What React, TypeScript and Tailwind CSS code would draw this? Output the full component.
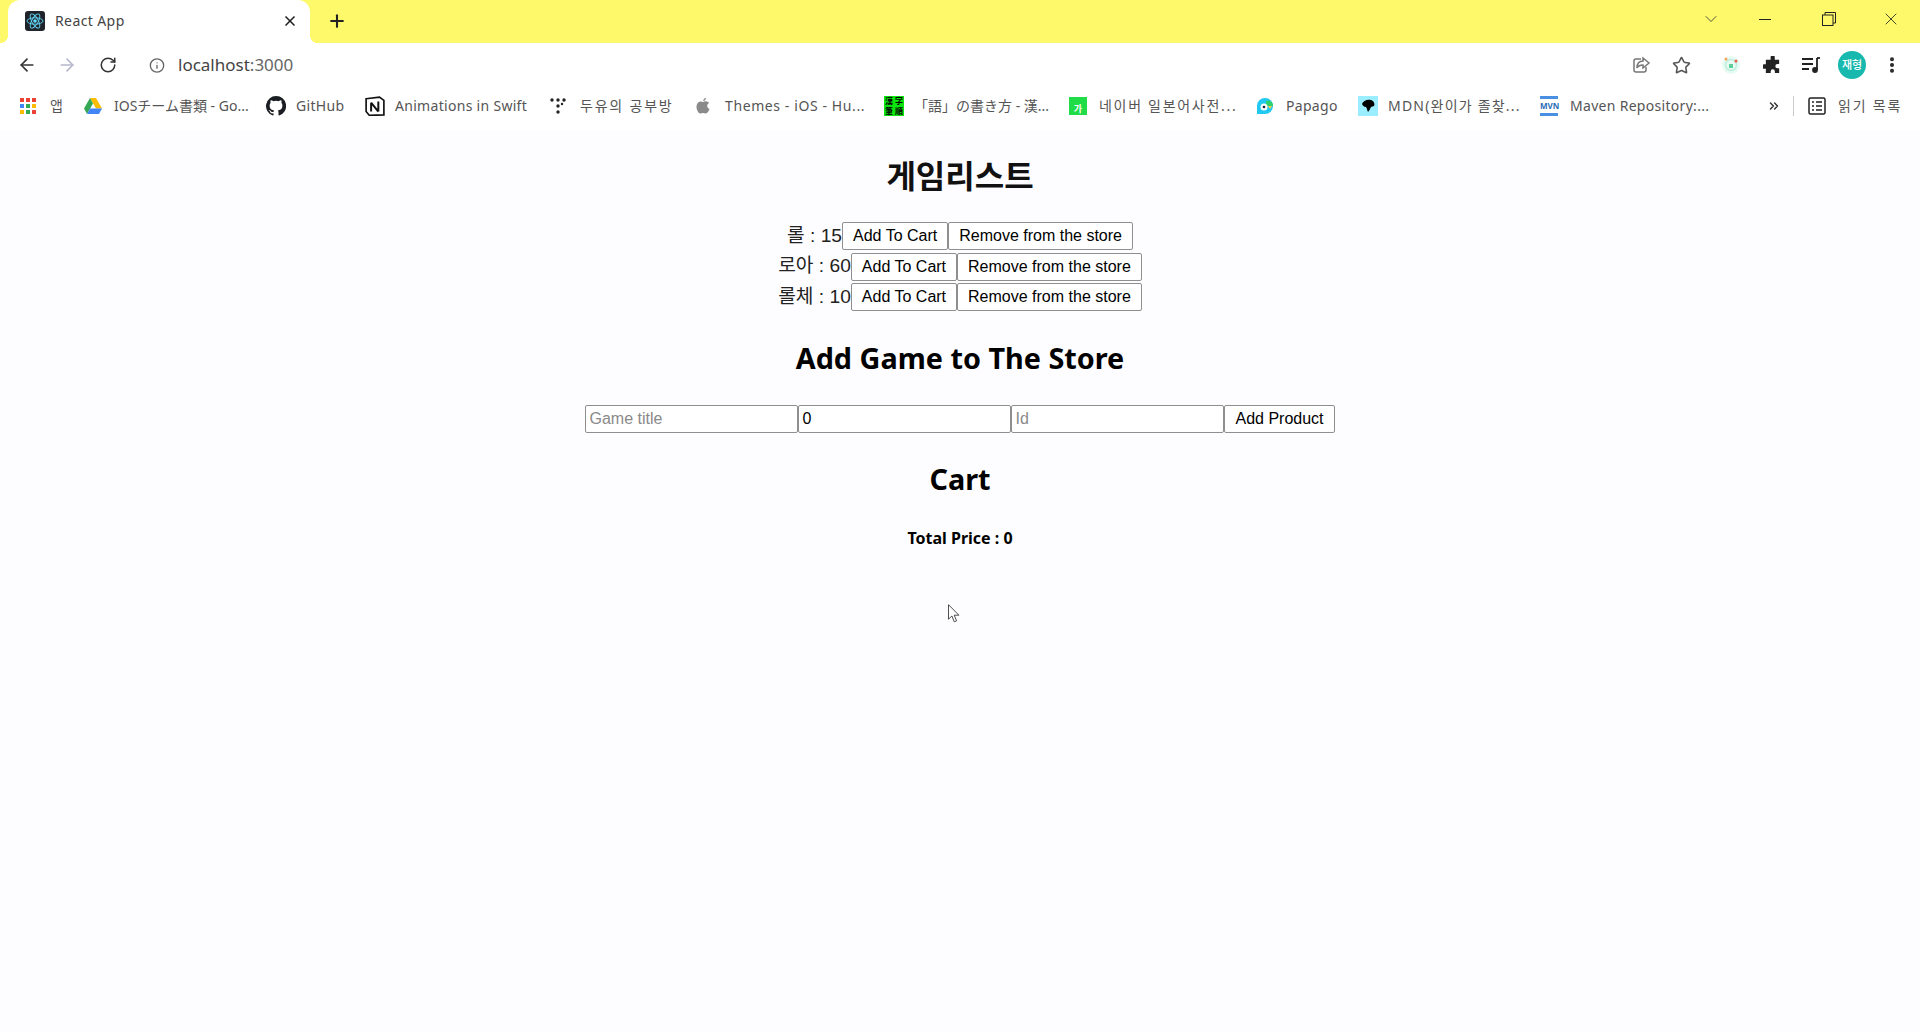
import { ArrowLeft, ArrowRight, ChevronDown, ChevronsRight, Info, MoreVertical, Plus, RotateCw, Star, X } from "lucide-react";
import type { ReactNode } from "react";

type Game = { name: string; price: number };

const GAMES: Game[] = [
  { name: "롤", price: 15 },
  { name: "로아", price: 60 },
  { name: "롤체", price: 10 },
];

const KO = "[font-family:'Noto_Sans','Noto_Sans_CJK_KR',sans-serif]";
const ARIAL = "[font-family:'Liberation_Sans','Noto_Sans_CJK_KR',sans-serif]";

function ReactLogo() {
  return (
    <svg viewBox="0 0 20 20" className="h-5 w-5 rounded-[3px] bg-[#20232a]">
      <circle cx="10" cy="10" r="1.8" fill="#61dafb" />
      <g fill="none" stroke="#61dafb" strokeWidth="0.9">
        <ellipse cx="10" cy="10" rx="8" ry="3.2" />
        <ellipse cx="10" cy="10" rx="8" ry="3.2" transform="rotate(60 10 10)" />
        <ellipse cx="10" cy="10" rx="8" ry="3.2" transform="rotate(120 10 10)" />
      </g>
    </svg>
  );
}

function AppsIcon() {
  const colors = ["#ea4335", "#ea4335", "#ea4335", "#4285f4", "#34a853", "#fbbc04", "#fbbc04", "#34a853", "#ea4335"];
  return (
    <div className="grid h-4 w-4 grid-cols-3 gap-[2px]">
      {colors.map((c, i) => (
        <svg key={i} viewBox="0 0 4 4" className="h-full w-full">
          <rect width="4" height="4" fill={c} />
        </svg>
      ))}
    </div>
  );
}

function Drive() {
  return (
    <svg viewBox="0 0 18 16" className="h-4 w-[18px]">
      <path d="M6 0h6l6 10.5h-6z" fill="#fbbc04" />
      <path d="M6 0l-6 10.5 3 5.5 6-10.5z" fill="#34a853" />
      <path d="M3 16h12l3-5.500H6z" fill="#4285f4" />
    </svg>
  );
}

function Github() {
  return (
    <svg viewBox="0 0 16 16" className="h-5 w-5" fill="#1b1f23">
      <path d="M8 0a8 8 0 0 0-2.530 15.590c.4.070.550-.170.550-.380v-1.340c-2.230.480-2.700-1.070-2.700-1.070-.360-.930-.890-1.170-.890-1.170-.730-.500.050-.490.050-.490.800.060 1.230.830 1.230.830.710 1.220 1.870.870 2.330.660.070-.520.280-.870.510-1.070-1.780-.200-3.640-.890-3.640-3.950 0-.870.310-1.590.820-2.150-.080-.200-.360-1.020.080-2.120 0 0 .670-.210 2.200.820a7.600 7.600 0 0 1 4 0c1.530-1.040 2.200-.820 2.200-.820.440 1.100.160 1.920.080 2.120.510.560.820 1.270.820 2.150 0 3.070-1.870 3.750-3.650 3.950.290.250.540.730.540 1.480v2.200c0 .210.150.460.550.380A8 8 0 0 0 8 0z" />
    </svg>
  );
}

function Notion() {
  return (
    <svg viewBox="0 0 18 18" className="h-5 w-5">
      <path d="M1 2.500L13 1l4 3v13L4 17.500 1 14z" fill="#fff" stroke="#111" strokeWidth="1.500" />
      <path d="M5.500 6v8M5.500 6l6.500 8M12 5v9" fill="none" stroke="#111" strokeWidth="1.800" />
    </svg>
  );
}

function Dots() {
  return (
    <svg viewBox="0 0 16 18" className="h-[18px] w-4" fill="#222">
      <circle cx="2" cy="3" r="1.700" />
      <circle cx="8" cy="3" r="1.700" />
      <circle cx="14" cy="3" r="1.700" />
      <circle cx="8" cy="9" r="1.700" />
      <circle cx="8" cy="15" r="1.700" />
      <circle cx="12" cy="7" r="1.200" />
    </svg>
  );
}

function Apple() {
  return (
    <svg viewBox="0 0 16 18" className="h-[18px] w-4" fill="#8a8a8a">
      <path d="M11 1c.1 1.400-1.200 3-2.800 3C8 2.500 9.500 1.100 11 1zM8 5c.9 0 1.700-.700 3-.700 1.200 0 2.400.700 3 1.700-2.600 1.500-2.200 5 .5 6-.7 1.800-2.100 4.500-3.700 4.500-1 0-1.500-.600-2.700-.600s-1.800.600-2.700.600C3.500 16.500 1.500 12.800 1.500 10c0-3.300 2.100-5.500 4.200-5.500C6.700 4.500 7.300 5 8 5z" />
    </svg>
  );
}

function Kanji() {
  return (
    <div className="grid h-5 w-5 grid-cols-2 bg-[#0ce60c] text-center text-[8px] leading-[10px] font-bold text-black [font-family:'Noto_Sans_CJK_JP',sans-serif]">
      <span>漢</span>
      <span>字</span>
      <span>筆</span>
      <span>順</span>
    </div>
  );
}

function Naver() {
  return (
    <div className="flex h-[18px] w-[18px] items-end justify-center bg-[#1fdc47] text-[9px] leading-[13px] font-bold text-white">
      가
    </div>
  );
}

function Papago() {
  return (
    <svg viewBox="0 0 18 20" className="h-5 w-[18px]">
      <path d="M9 2a8 8 0 0 1 8 8 8 8 0 0 1-8 8H1v-8a8 8 0 0 1 8-8z" fill="#21c8f0" />
      <path d="M10 5a5 5 0 0 1 7 5h-7z" fill="#2fd06c" />
      <circle cx="8" cy="11" r="3.500" fill="#fff" />
      <circle cx="8" cy="11" r="1.300" fill="#123" />
      <path d="M12 10h4l-2 3z" fill="#fbd33a" />
    </svg>
  );
}

function Mdn() {
  return (
    <svg viewBox="0 0 20 20" className="h-5 w-5">
      <rect width="20" height="20" fill="#9aeeff" />
      <path d="M4 8c1-3 5-5 9-4 3 1 4 4 3 6l-3 1c-1 2-2 4-3 5-1-2-1-4-2-5-2 0-3-1-4-3z" fill="#000" />
    </svg>
  );
}

function Maven() {
  return (
    <div className="flex h-5 w-[18px] flex-col justify-between">
      <div className="h-[3px] bg-[#4a90e2]" />
      <span className="text-center text-[8px] leading-[8px] font-bold text-[#2b6cb8]">MVN</span>
      <div className="h-[3px] bg-[#4a90e2]" />
    </div>
  );
}

function Bookmark({ icon, label, width, spacing = "tracking-[0.3px]" }: { icon?: ReactNode; label: string; width: string; spacing?: string }) {
  return (
    <div className={`flex shrink-0 items-center ${width}`}>
      <div className="flex w-[30px] shrink-0 items-center">{icon}</div>
      <span className={`whitespace-nowrap ${spacing}`}>{label}</span>
    </div>
  );
}

function ToolbarIcon({ children, width }: { children: ReactNode; width: string }) {
  return <div className={`flex shrink-0 items-center justify-center ${width}`}>{children}</div>;
}

function PageButton({ children }: { children: ReactNode }) {
  return (
    <button className={`h-7 rounded-[2px] border border-[#8f8f8f] bg-white px-[10px] text-base whitespace-nowrap text-black ${ARIAL}`}>
      {children}
    </button>
  );
}

function GameRow({ game }: { game: Game }) {
  return (
    <div className="flex h-[30.500px] items-center justify-center">
      <span className={`text-[19.200px] text-[#222] ${ARIAL}`}>
        {game.name} : {game.price}
      </span>
      <PageButton>Add To Cart</PageButton>
      <PageButton>Remove from the store</PageButton>
    </div>
  );
}

function TextField({ placeholder, value }: { placeholder?: string; value?: string }) {
  return (
    <input
      readOnly
      placeholder={placeholder}
      value={value ?? ""}
      className="box-border h-7 w-[213px] rounded-[2px] border border-[#8f8f8f] bg-white px-[3px] text-base text-black placeholder:text-[#8a8a8a]"
    />
  );
}

export default function App() {
  return (
    <div className="relative flex min-h-[1032px] flex-col bg-[#fdfdff] [font-family:'Noto_Sans','Noto_Sans_CJK_KR',sans-serif]">
      {/* tab strip */}
      <div className="flex h-[43px] shrink-0 items-center bg-[#fdf96a]">
        <div className="relative ml-2 flex h-full w-[302px] shrink-0 items-center rounded-t-xl bg-white pr-3 pb-[2px] pl-[17px] before:absolute before:bottom-0 before:-left-2 before:h-2 before:w-2 before:bg-[radial-gradient(circle_at_0_0,transparent_8px,white_8px)] after:absolute after:-right-2 after:bottom-0 after:h-2 after:w-2 after:bg-[radial-gradient(circle_at_100%_0,transparent_8px,white_8px)]">
          <ReactLogo />
          <span className="ml-[10px] flex-1 text-[14px] tracking-[0.4px] text-[#444]">React App</span>
          <X size={16} strokeWidth={2.500} className="text-[#222]" />
        </div>
        <Plus size={20} strokeWidth={2.500} className="mb-[2px] ml-[17px] text-[#222]" />
        <div className="flex-1" />
        <div className="mb-[5px] flex items-center">
          <ChevronDown size={20} className="mr-[38px] text-[#333]" strokeWidth={1} />
          <div className="mr-[51px] h-px w-3 bg-[#222]" />
          <svg viewBox="0 0 14 14" className="mr-[45px] h-[14px] w-[14px]" fill="none" stroke="#222">
            <rect x="0.500" y="3" width="10.500" height="10.500" />
            <path d="M3 3V.5h10.500V11H11" />
          </svg>
          <X size={20} strokeWidth={1} className="mr-[19px] text-[#222]" />
        </div>
      </div>

      {/* address bar */}
      <div className="flex h-[44px] shrink-0 items-center bg-white pr-[18px] pl-[17px]">
        <ToolbarIcon width="w-5">
          <ArrowLeft size={20} className="text-[#333]" />
        </ToolbarIcon>
        <ToolbarIcon width="w-5 ml-[20px]">
          <ArrowRight size={20} className="text-[#b6b8cc]" />
        </ToolbarIcon>
        <ToolbarIcon width="w-5 ml-[21px]">
          <RotateCw size={18} className="text-[#333]" />
        </ToolbarIcon>
        <ToolbarIcon width="w-4 ml-[31px]">
          <Info size={17} className="text-[#666]" />
        </ToolbarIcon>
        <span className="ml-[13px] text-[17px] text-[#666]">
          <span className="text-[#444]">localhost</span>:3000
        </span>
        <div className="flex-1" />
        <ToolbarIcon width="w-5">
          <svg viewBox="0 0 20 20" className="h-5 w-5" fill="none" stroke="#777" strokeWidth="1.500">
            <path d="M10 4H5a2 2 0 0 0-2 2v9a2 2 0 0 0 2 2h8a2 2 0 0 0 2-2v-3" />
            <path d="M12 3l6 5-6 5v-3c-3 0-5 1-6 3 0-4 2-7 6-7z" />
          </svg>
        </ToolbarIcon>
        <ToolbarIcon width="w-5 ml-[20px]">
          <Star size={19} className="text-[#555]" />
        </ToolbarIcon>
        <ToolbarIcon width="w-5 ml-[30px]">
          <svg viewBox="0 0 20 20" className="h-5 w-5">
            <circle cx="10" cy="10" r="9" fill="#e8fbf3" />
            <circle cx="10" cy="10" r="5.500" fill="none" stroke="#bdeedd" strokeWidth="1.500" />
            <circle cx="5" cy="4" r="1.500" fill="#f5a25d" />
            <circle cx="15" cy="6" r="1.500" fill="#e8604c" />
            <rect x="8" y="9" width="4" height="4" fill="#5ccf9a" />
          </svg>
        </ToolbarIcon>
        <ToolbarIcon width="w-5 ml-[21px]">
          <svg viewBox="0 0 20 20" className="h-[19px] w-[19px]" fill="#222">
            <path d="M8 1.500a2.200 2.200 0 0 1 4.400 0V4H17v4.500h-1.800a2.200 2.200 0 0 0 0 4.400H17V18h-4.500v-1.800a2.200 2.200 0 0 0-4.400 0V18H3v-4.600H1.500a2.400 2.400 0 0 1 0-4.800H3V4h5z" />
          </svg>
        </ToolbarIcon>
        <ToolbarIcon width="w-5 ml-[19px]">
          <svg viewBox="0 0 20 20" className="h-5 w-5" fill="none" stroke="#222" strokeWidth="1.800">
            <path d="M1 4h11M1 9h11M1 14h7" />
            <path d="M16 3v12" />
            <path d="M16 3h3" />
            <circle cx="14" cy="15" r="2" fill="#222" />
          </svg>
        </ToolbarIcon>
        <div className="ml-[17px] flex h-7 w-7 shrink-0 items-center justify-center rounded-full bg-[#17b8ad] text-[11px] font-medium text-white">
          재형
        </div>
        <ToolbarIcon width="w-5 ml-[16px]">
          <MoreVertical size={20} strokeWidth={2.800} className="text-[#222]" />
        </ToolbarIcon>
      </div>

      {/* bookmarks */}
      <div className="flex h-[43px] shrink-0 items-center bg-white pb-[6px] pl-5 text-[14px] text-[#555]">
        <Bookmark icon={<AppsIcon />} label="앱" width="w-[64px]" />
        <Bookmark icon={<Drive />} label="IOSチーム書類 - Go..." width="w-[182px]" spacing="tracking-normal" />
        <Bookmark icon={<Github />} label="GitHub" width="w-[99px]" />
        <Bookmark icon={<Notion />} label="Animations in Swift" width="w-[185px]" />
        <Bookmark icon={<Dots />} label="두유의 공부방" width="w-[145px]" spacing="tracking-[1.800px]" />
        <Bookmark icon={<Apple />} label="Themes - iOS - Hu..." width="w-[189px]" spacing="tracking-[0.600px]" />
        <Bookmark icon={<Kanji />} label="「語」の書き方 - 漢..." width="w-[185px]" spacing="tracking-normal" />
        <Bookmark icon={<Naver />} label="네이버 일본어사전..." width="w-[187px]" spacing="tracking-[1.700px]" />
        <Bookmark icon={<Papago />} label="Papago" width="w-[102px]" />
        <Bookmark icon={<Mdn />} label="MDN(완이가 졸찾..." width="w-[182px]" spacing="tracking-[1.200px]" />
        <Bookmark icon={<Maven />} label="Maven Repository:..." width="w-[227px]" />
        <ChevronsRight size={14} strokeWidth={2.500} className="text-[#333]" />
        <div className="ml-[12px] h-5 w-px bg-[#ccc]" />
        <div className="ml-[14px] flex items-center gap-3">
          <svg viewBox="0 0 18 18" className="h-[18px] w-[18px]" fill="none" stroke="#222" strokeWidth="1.500">
            <rect x="1" y="1" width="16" height="16" rx="1.500" />
            <path d="M4 5h2M8 5h6M4 9h2M8 9h6M4 13h2M8 13h6" />
          </svg>
          <span className="tracking-[1.800px]">읽기 목록</span>
        </div>
      </div>

      {/* page */}
      <main className="flex flex-1 flex-col items-center pt-[26px] text-black">
        <h1 className={`text-[32px] leading-[40px] font-bold text-[#111] ${KO}`}>게임리스트</h1>
        <div className="mt-[25px] flex flex-col items-center">
          {GAMES.map((game) => (
            <GameRow key={game.name} game={game} />
          ))}
        </div>
        <h2 className={`mt-[25px] text-[28.800px] leading-[40px] font-bold ${KO}`}>Add Game to The Store</h2>
        <form className={`mt-[27px] flex items-center ${ARIAL}`}>
          <TextField placeholder="Game title" />
          <TextField value="0" />
          <TextField placeholder="Id" />
          <PageButton>Add Product</PageButton>
        </form>
        <h2 className={`mt-[26px] text-[28.800px] leading-[40px] font-bold ${KO}`}>Cart</h2>
        <p className={`mt-[28px] text-[16px] leading-[22px] font-bold ${KO}`}>Total Price : 0</p>
      </main>

      {/* mouse pointer over the page */}
      <svg viewBox="0 0 12 19" className="absolute top-[604px] left-[948px] h-[19px] w-3" fill="#fff" stroke="#222" strokeWidth="0.800">
        <path d="M.5.700v14.500l3.400-3.200 2.400 5.800 2.300-1-2.400-5.600h4.700z" />
      </svg>
    </div>
  );
}
